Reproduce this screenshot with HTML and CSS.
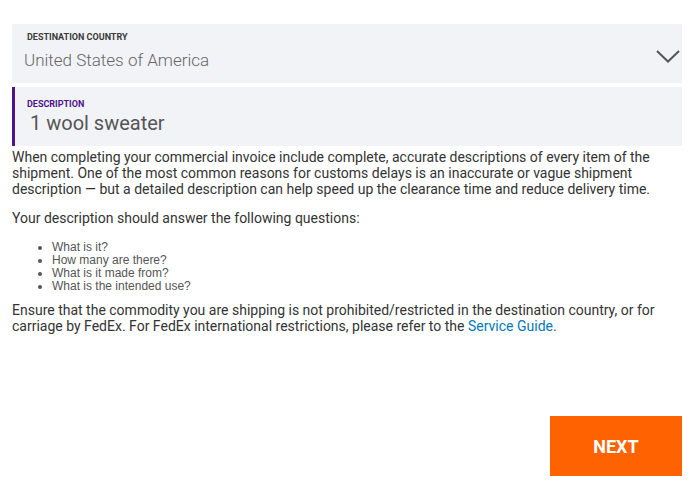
FILE: index.html
```html
<!DOCTYPE html>
<html>
<head>
<meta charset="utf-8">
<link rel="stylesheet" href="styles.css">
</head>
<body>
<div class="page">
  <div class="field select">
    <div class="field-text">
      <div class="label">DESTINATION COUNTRY</div>
      <div class="value country">United States of America</div>
    </div>
    <svg class="chevron" width="24" height="13" viewBox="0 0 24 13"><path d="M1 1 L12 11.5 L23 1" fill="none" stroke="#555" stroke-width="2"/></svg>
  </div>
  <div class="field active">
    <div class="field-text">
      <div class="label purple">DESCRIPTION</div>
      <div class="value desc">1 wool sweater</div>
    </div>
  </div>
  <div class="help">
    <p>When completing your commercial invoice include complete, accurate descriptions of every item of the shipment. One of the most common reasons for customs delays is an inaccurate or vague shipment description — but a detailed description can help speed up the clearance time and reduce delivery time.</p>
    <p>Your description should answer the following questions:</p>
    <ul class="questions">
      <li>What is it?</li>
      <li>How many are there?</li>
      <li>What is it made from?</li>
      <li>What is the intended use?</li>
    </ul>
    <p>Ensure that the commodity you are shipping is not prohibited/restricted in the destination country, or for carriage by FedEx. For FedEx international restrictions, please refer to the <a href="#" class="link">Service Guide</a>.</p>
  </div>
  <div class="actions">
    <button class="next">NEXT</button>
  </div>
</div>
</body>
</html>
```
FILE: styles.css
```css
html, body {
  margin: 0;
  padding: 0;
  background: #fff;
}
body {
  font-family: Roboto, "Liberation Sans", sans-serif;
  color: #333;
}
.page {
  padding: 24px 13px 0 12px;
}
.field {
  background: #f2f3f7;
  height: 59px;
  display: flex;
  align-items: flex-start;
  justify-content: space-between;
}
.field + .field {
  margin-top: 4px;
}
.field-text {
  padding-left: 15px;
  padding-top: 8px;
}
.label {
  font-size: 9px;
  font-weight: 700;
  color: #3a3a3a;
  line-height: 11px;
}
.label.purple {
  color: #4d148c;
}
.value {
  color: #666;
}
.country {
  font-size: 17px;
  font-weight: 300;
  line-height: 20px;
  margin-left: -3px;
  margin-top: 7px;
}
.chevron {
  margin-top: 26px;
  margin-right: 2px;
}
.active {
  border-left: 3px solid #4d148c;
}
.active .field-text {
  padding-left: 12px;
  padding-top: 12px;
}
.desc {
  font-size: 20px;
  line-height: 24px;
  color: #555;
  margin-left: 3px;
  margin-top: 1px;
}
.help {
  font-size: 14px;
  line-height: 16px;
  color: #333;
}
.help p {
  margin: 3px 0 13px 0;
}
.questions {
  margin: 15px 0 9px 0;
  padding-left: 40px;
  font-family: "Liberation Sans", Arial, sans-serif;
  font-size: 12px;
  line-height: 13px;
  color: #555;
}
.link {
  color: #007ab7;
  text-decoration: none;
}
.actions {
  display: flex;
  justify-content: flex-end;
  margin-top: 82px;
}
.next {
  width: 132px;
  height: 60px;
  background: #ff6200;
  border: none;
  color: #fff;
  font-family: Roboto, "Liberation Sans", sans-serif;
  font-weight: 700;
  font-size: 18px;
}
```
